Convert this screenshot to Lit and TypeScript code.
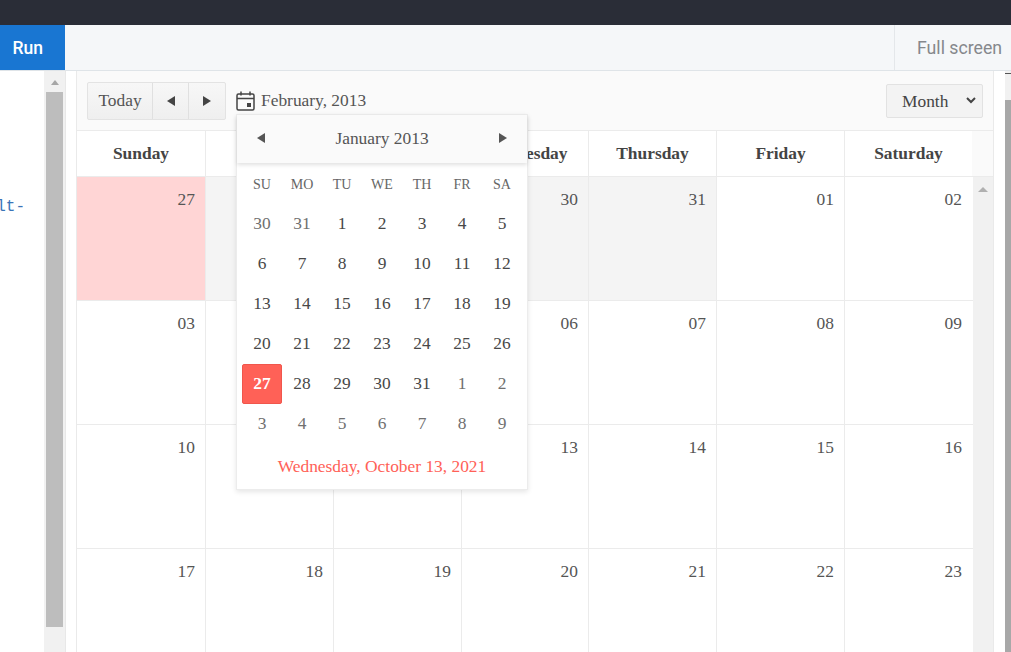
import { LitElement, html, css, svg } from "lit";
import { customElement } from "lit/decorators.js";

const left = svg`<path d="M8 0 0 5l8 5z" fill="currentColor"/>`;
const right = svg`<path d="M0 0l8 5-8 5z" fill="currentColor"/>`;
const tri = (p: unknown) => html`<svg width="8" height="10" viewBox="0 0 8 10">${p}</svg>`;

const weekNames = ["Sunday", "Monday", "Tuesday", "Wednesday", "Thursday", "Friday", "Saturday"];
const weeks = [
  ["27", "28", "29", "30", "31", "01", "02"],
  ["03", "04", "05", "06", "07", "08", "09"],
  ["10", "11", "12", "13", "14", "15", "16"],
  ["17", "18", "19", "20", "21", "22", "23"],
];
const popupDays = ["SU", "MO", "TU", "WE", "TH", "FR", "SA"];
const popupCells: [string, boolean][] = [
  ...["30", "31"].map((d) => [d, true] as [string, boolean]),
  ...Array.from({ length: 31 }, (_, i) => [String(i + 1), false] as [string, boolean]),
  ...Array.from({ length: 9 }, (_, i) => [String(i + 1), true] as [string, boolean]),
];

@customElement("app-root")
export class AppRoot extends LitElement {
  static styles = css`
    :host { display: block; width: 1011px; height: 652px; overflow: hidden; background: #fff; font-family: "Liberation Serif", serif; color: #444; }
    .top { height: 25px; background: #2a2d37; }
    .bar { height: 45px; display: flex; background: #f5f7f9; border-bottom: 1px solid #dfe4e8; font-family: Roboto, sans-serif; }
    .run { width: 65px; background: #1976d2; color: #fff; font-weight: 500; font-size: 17.5px; display: flex; align-items: center; justify-content: flex-end; padding-right: 22px; box-sizing: border-box; }
    .spacer { flex: 1; }
    .full { width: 117px; box-sizing: border-box; border-left: 1px solid #e4e7ea; color: #85888c; font-size: 17.7px; white-space: nowrap; padding-left: 22px; display: flex; align-items: center; overflow: hidden; }
    .main { display: flex; height: 581px; }
    .code { width: 44px; overflow: hidden; display: flex; justify-content: flex-end; padding: 128px 19px 0 0; box-sizing: border-box; font: 16px/17px "Liberation Mono", monospace; color: #3b74b8; }
    .vs { background: #f1f1f1; display: flex; flex-direction: column; align-items: center; }
    .vs.a { width: 21px; }
    .arrow { width: 0; height: 0; border: 4.5px solid transparent; border-top: 0; border-bottom: 5px solid #a6a6a6; margin: 9px 0 0; }
    .thumb { background: #bdbdbd; width: 17px; height: 535px; margin-top: 7px; }
    .gap { width: 10px; border-left: 1px solid #e8e8e8; }
    .sched { width: 918px; box-sizing: border-box; border-left: 1px solid #eaeaea; border-right: 1px solid #eaeaea; position: relative; }
    .tb { height: 59px; background: #fafafa; border-bottom: 1px solid #ebebeb; display: flex; align-items: center; padding: 0 10px; gap: 10px; font-size: 17.4px; }
    .group { display: flex; height: 36px; border: 1px solid #e3e3e3; border-radius: 2px; background: linear-gradient(#f7f7f7, #efefef); }
    .group > div { display: flex; align-items: center; justify-content: center; border-left: 1px solid #e0e0e0; width: 35px; color: #444; }
    .group > .today { border-left: 0; width: 64px; color: #555; }
    .group > div:last-child { width: 36px; }
    .title { display: flex; align-items: center; gap: 6px; flex: 1; color: #555; }
    .selwrap { display: flex; position: relative; }
    .sel { appearance: none; width: 97px; height: 34px; font: 17.4px "Liberation Serif", serif; color: #444; background: #f3f3f3; border: 1px solid #e2e2e2; border-radius: 2px; padding: 0 0 0 15px; }
    .chev { position: absolute; right: 7px; top: 13px; pointer-events: none; }
    .head { display: flex; height: 46px; border-bottom: 1px solid #ebebeb; box-sizing: border-box; background: #fafafa; }
    .head div { background: #fff; border-right: 1px solid #ebebeb; display: flex; align-items: center; justify-content: center; font-weight: 700; font-size: 17.4px; box-sizing: border-box; }
    .head div:last-child { border-right: 0; }
    .body { display: flex; height: 475px; overflow: hidden; }
    .grid { width: 896px; flex: none; }
    .row { display: flex; height: 124px; border-bottom: 1px solid #ebebeb; box-sizing: border-box; }
    .cols { flex: none; box-sizing: border-box; border-right: 1px solid #ebebeb; text-align: right; padding: 12px 10px 0 0; font-size: 17.4px; line-height: 20px; color: #555; }
    .cols:last-child { border-right: 0; }
    .cols.muted { background: #f4f4f4; }
    .cols.pink { background: #ffd5d5; }
    .vs.b { flex: 1; }
    .vs.b .arrow { margin-top: 10px; border-width: 0 5px 5px; border-bottom-color: #b0b0b0; }
    .outer { width: 11px; }
    .vs.c { flex: 1; }
    .tick { width: 6px; height: 1px; background: #555; margin-top: 2px; align-self: flex-start; }
    .thumb2 { background: #a8a8a8; align-self: stretch; height: 552px; margin-top: 26px; }
    .popup { position: absolute; left: 159px; top: 43px; width: 292px; height: 376px; box-sizing: border-box; background: #fff; border: 1px solid #ececec; box-shadow: 0 2px 5px rgba(0,0,0,.1); }
    .ph { height: 48px; background: #fafafa; box-shadow: 0 2px 4px rgba(0,0,0,.12); display: flex; align-items: center; justify-content: space-between; padding: 0 20px 2px; box-sizing: border-box; font-size: 17.4px; color: #555; position: relative; }
    .pgrid { display: grid; grid-template-columns: repeat(7, 40px); padding: 0 5px; }
    .dow { height: 41px; padding-top: 3px; box-sizing: border-box; display: flex; align-items: center; justify-content: center; font-size: 14px; color: #666; }
    .pd { height: 40px; padding-bottom: 2px; display: flex; align-items: center; justify-content: center; font-size: 17.4px; color: #484848; box-sizing: border-box; }
    .pd.other { color: #707070; }
    .pd.on { background: #ff6157; color: #fff; font-weight: 700; border-radius: 2px; border: 1px solid #f0564c; }
    .foot { text-align: center; color: #ff6157; font-size: 17.4px; line-height: 20px; padding-top: 12px; }
  `;

  render() {
    const colW = [129, 128, 128, 127, 128, 128, 127];
    return html`
      <div class="top"></div>
      <div class="bar">
        <div class="run">Run</div>
        <div class="spacer"></div>
        <div class="full">Full screen</div>
      </div>
      <div class="main">
        <div class="code">lt-</div>
        <div class="vs a"><div class="arrow"></div><div class="thumb"></div></div>
        <div class="gap"></div>
        <div class="sched">
          <div class="tb">
            <div class="group">
              <div class="today">Today</div>
              <div>${tri(left)}</div>
              <div>${tri(right)}</div>
            </div>
            <div class="title">
              <svg width="19" height="20" viewBox="0 0 19 20" fill="none" stroke="#444" stroke-width="1.5">
                <rect x="1" y="3" width="17" height="16" rx="1.5"/>
                <path d="M1 7.5h17M5 0.5v4M14 0.5v4"/>
                <rect x="11" y="12" width="4" height="4" fill="#444" stroke="none"/>
              </svg>
              <span>February, 2013</span>
            </div>
            <div class="selwrap">
              <select class="sel"><option>Month</option></select>
              <svg class="chev" width="10" height="7" viewBox="0 0 10 7" fill="none" stroke="#444" stroke-width="2"><path d="M1 1l4 4 4-4"/></svg>
            </div>
          </div>
          <div class="head">
            ${weekNames.map((n, i) => html`<div style="width:${colW[i]}px">${n}</div>`)}
          </div>
          <div class="body">
            <div class="grid">
              ${weeks.map((w, r) => html`<div class="row">
                ${w.map((d, i) => html`<div
                  class="cols ${r === 0 && i === 0 ? "pink" : r === 0 && i < 5 ? "muted" : ""}"
                  style="width:${colW[i]}px">${d}</div>`)}
              </div>`)}
            </div>
            <div class="vs b"><div class="arrow"></div></div>
          </div>
          <div class="popup">
            <div class="ph">
              ${tri(left)}
              <span>January 2013</span>
              ${tri(right)}
            </div>
            <div class="pgrid">
              ${popupDays.map((d) => html`<div class="dow">${d}</div>`)}
              ${popupCells.map(([d, o], i) => html`<div class="pd ${o ? "other" : ""} ${i === 28 ? "on" : ""}">${d}</div>`)}
            </div>
            <div class="foot">Wednesday, October 13, 2021</div>
          </div>
        </div>
        <div class="outer"></div>
        <div class="vs c"><div class="tick"></div><div class="thumb2"></div></div>
      </div>
    `;
  }
}
